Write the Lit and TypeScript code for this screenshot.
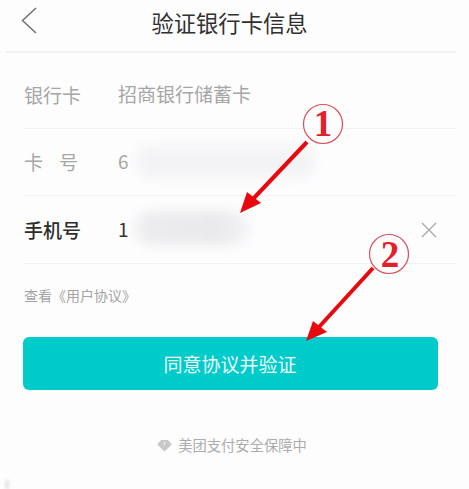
import { LitElement, html, css, svg } from "lit";
import { customElement } from "lit/decorators.js";

@customElement("app-root")
export class AppRoot extends LitElement {
  static styles = css`
    :host {
      display: block;
      position: relative;
      width: 469px;
      height: 489px;
      overflow: hidden;
      background: #fefdfe;
      font-family: "Noto Sans CJK SC", "Liberation Sans", sans-serif;
    }
    .header {
      height: 51px;
      margin: 0 13px 0 6px;
      display: flex;
      align-items: center;
      justify-content: center;
      position: relative;
      border-bottom: 2px solid #f3f2f3;
    }
    .title {
      font-size: 22.300px;
      line-height: 30px;
      color: #303030;
      margin: -8px 0 0 -3px;
    }
    .back {
      position: absolute;
      left: 14px;
      top: 6px;
    }
    .list {
      margin: 9px 13px 0 24px;
    }
    .row {
      height: 67px;
      box-sizing: border-box;
      border-bottom: 1px solid #f3f2f3;
      display: flex;
      align-items: center;
      font-size: 19px;
      color: #a6a6a6;
    }
    .row.active {
      height: 68px;
    }
    .row.active .label {
      color: #2c2c2c;
      font-weight: 500;
    }
    .row.active .value {
      color: #333;
    }
    .label {
      width: 94px;
      flex: none;
      line-height: 26px;
    }
    .label.spread {
      display: flex;
      justify-content: space-between;
      width: 54px;
      margin-right: 40px;
    }
    .value {
      flex: 1;
      line-height: 26px;
      margin-top: -2px;
    }
    .clear {
      flex: none;
      margin-right: 19px;
      display: block;
    }
    .agreement {
      margin: 21px 0 0 24px;
      font-size: 14px;
      line-height: 20px;
      color: #a3a3a3;
    }
    .submit {
      margin: 32px 0 0 23px;
      width: 415px;
      height: 53px;
      border-radius: 6px;
      background: #00cbcb;
      color: #eefdfd;
      font-size: 19px;
      display: flex;
      align-items: center;
      justify-content: center;
      padding-right: 1px;
      box-sizing: border-box;
    }
    .footer {
      margin: 45px 0 0;
      display: flex;
      justify-content: center;
      align-items: center;
      gap: 6px;
      font-size: 14.300px;
      line-height: 20px;
      color: #acacac;
      padding-right: 5px;
    }
    .smudge {
      position: absolute;
      border-radius: 20px;
    }
    .smudge.card {
      left: 135px;
      top: 146px;
      width: 180px;
      height: 32px;
      background: #f3f2f4;
      filter: blur(6px);
    }
    .smudge.phone {
      left: 135px;
      top: 211px;
      width: 114px;
      height: 34px;
      background: linear-gradient(90deg, #edecee, #e9e8ea 70%, #f3f2f4);
      filter: blur(6px);
    }
    .speck {
      position: absolute;
      left: 5px;
      top: 480px;
      width: 4px;
      height: 9px;
      background: #e6e6e6;
      filter: blur(1.500px);
    }
    .overlay {
      position: absolute;
      left: 0;
      top: 0;
      width: 469px;
      height: 489px;
      pointer-events: none;
    }
    .num {
      font-family: "Liberation Serif", serif;
      font-weight: 700;
      font-size: 37px;
      fill: #e2202c;
    }
  `;

  render() {
    return html`
      <div class="header">
        <svg class="back" width="20" height="30" viewBox="0 0 20 30" fill="none">
          <path d="M16 2 L2.500 14.500 L16 27" stroke="#707070" stroke-width="1.500" />
        </svg>
        <div class="title">验证银行卡信息</div>
      </div>
      <div class="list">
        <div class="row">
          <div class="label">银行卡</div>
          <div class="value">招商银行储蓄卡</div>
        </div>
        <div class="row">
          <div class="label spread"><span>卡</span><span>号</span></div>
          <div class="value">6</div>
        </div>
        <div class="row active">
          <div class="label">手机号</div>
          <div class="value">1</div>
          <svg class="clear" width="16" height="16" viewBox="0 0 16 16" fill="none">
            <path d="M1 1 L15 15 M15 1 L1 15" stroke="#a8a8a8" stroke-width="1.300" />
          </svg>
        </div>
      </div>
      <div class="agreement">查看《用户协议》</div>
      <div class="submit">同意协议并验证</div>
      <div class="footer">
        <svg width="15" height="13" viewBox="0 0 15 13">
          <path d="M4 1 H11 L14.800 5.500 L7.500 12.500 L0.200 5.500 Z" fill="#c8c8c8" />
          <path d="M6.500 3 H8.500 L7.500 7 Z" fill="#eee" />
        </svg>
        <span>美团支付安全保障中</span>
      </div>
      <div class="smudge card"></div>
      <div class="smudge phone"></div>
      <div class="speck"></div>
      <svg class="overlay" viewBox="0 0 469 489">
        ${svg`
          <circle cx="323" cy="124" r="19.500" fill="#fefdfe" stroke="#d9505a" stroke-width="1.200" />
          <text class="num" x="323" y="136" text-anchor="middle">1</text>
          <circle cx="389" cy="254" r="19.500" fill="#fefdfe" stroke="#d9505a" stroke-width="1.200" />
          <text class="num" x="390" y="267" text-anchor="middle">2</text>
          <path d="M307 142 L253 199" stroke="#e8090f" stroke-width="4" />
          <path d="M240 213 L247 192 L261 203 Z" fill="#e8090f" />
          <path d="M373 268 L319 327" stroke="#e8090f" stroke-width="4" />
          <path d="M306 341 L313 321 L327 332 Z" fill="#e8090f" />
        `}
      </svg>
    `;
  }
}
